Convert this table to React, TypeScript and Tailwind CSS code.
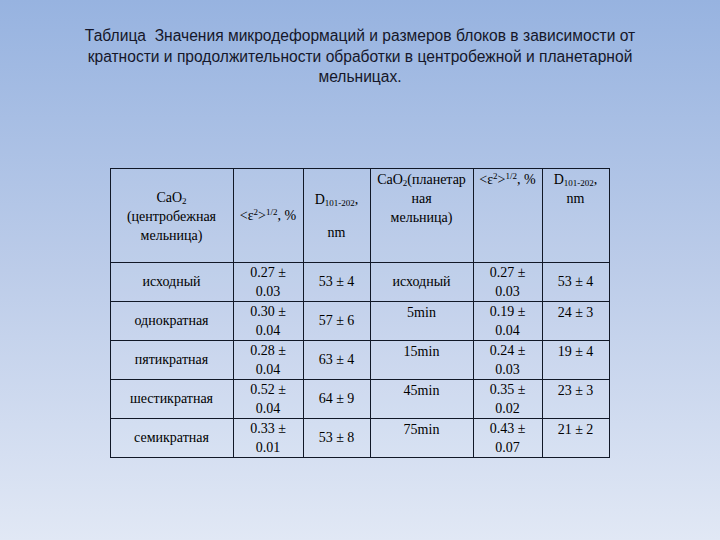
import * as React from 'react';

const leftRows = [
	['исходный', '0.27 ±', '0.03', '53 ± 4'],
	['однократная', '0.30 ±', '0.04', '57 ± 6'],
	['пятикратная', '0.28 ±', '0.04', '63 ± 4'],
	['шестикратная', '0.52 ±', '0.04', '64 ± 9'],
	['семикратная', '0.33 ±', '0.01', '53 ± 8']
];

const rightRows = [
	['исходный', '0.27 ±', '0.03', '53 ± 4'],
	['5min', '0.19 ±', '0.04', '24 ± 3'],
	['15min', '0.24 ±', '0.03', '19 ± 4'],
	['45min', '0.35 ±', '0.02', '23 ± 3'],
	['75min', '0.43 ±', '0.07', '21 ± 2']
];

const Eps = () => (
	<span>
		&lt;ε<sup className="text-[9px]">2</sup>&gt;<sup className="text-[9px]">1/2</sup>, %
	</span>
);

const DHead = () => (
	<span>
		D<sub className="text-[9px]">101-202</sub>,
	</span>
);

export default function App() {
	const cell =
		"border border-[#111827] text-center [font-family:'Liberation_Serif','DejaVu_Serif',serif] text-[14px] leading-[19px] text-black";

	return (
		<div className="flex h-[540px] w-[720px] flex-col items-center bg-gradient-to-b from-[#97b3e0] via-[#bccce9] to-[#e1e8f5]">
			{/* Title */}
			<div className="mt-[26px] w-[680px] text-center [font-family:'Liberation_Sans',Arial,sans-serif] text-[15.6px] leading-[20.5px] text-[#15172a]">
				Таблица&nbsp; Значения микродеформаций и размеров блоков в зависимости от
				<br />
				кратности и продолжительности обработки в центробежной и планетарной
				<br />
				мельницах.
			</div>

			<table className="mt-[80px] ml-[-1px] table-fixed border-collapse bg-white/5">
				<colgroup>
					<col className="w-[123px]" />
					<col className="w-[70px]" />
					<col className="w-[67px]" />
					<col className="w-[103px]" />
					<col className="w-[69px]" />
					<col className="w-[67px]" />
				</colgroup>
				<tbody>
					<tr className="h-[94px]">
						<td className={`${cell} align-middle`}>
							<div className="mt-[2px]">
								CaO<sub className="text-[9px]">2</sub>
								<br />
								(центробежная
								<br />
								мельница)
							</div>
						</td>
						<td className={`${cell} align-middle`}>
							<Eps />
						</td>
						<td className={`${cell} align-middle`}>
							<div className="mt-[1px]">
								<DHead />
								<div className="mt-[14px]">nm</div>
							</div>
						</td>
						<td className={`${cell} pt-[1px] align-top`}>
							CaO<sub className="text-[9px]">2</sub>(планетар
							<br />
							ная
							<br />
							мельница)
						</td>
						<td className={`${cell} pt-[1px] align-top`}>
							<Eps />
						</td>
						<td className={`${cell} pt-[1px] align-top`}>
							<DHead />
							<br />
							nm
						</td>
					</tr>
					{leftRows.map((l, i) => {
						const r = rightRows[i];
						const top = i === 0 ? 'align-middle' : 'align-top pt-[1px]';
						return (
							<tr key={i} className="h-[38.4px]">
								<td className={`${cell} align-middle`}>{l[0]}</td>
								<td className={`${cell} align-middle`}>
									{l[1]}
									<br />
									{l[2]}
								</td>
								<td className={`${cell} align-middle`}>{l[3]}</td>
								<td className={`${cell} ${top}`}>{r[0]}</td>
								<td className={`${cell} align-middle`}>
									{r[1]}
									<br />
									{r[2]}
								</td>
								<td className={`${cell} ${top}`}>{r[3]}</td>
							</tr>
						);
					})}
				</tbody>
			</table>
		</div>
	);
}
